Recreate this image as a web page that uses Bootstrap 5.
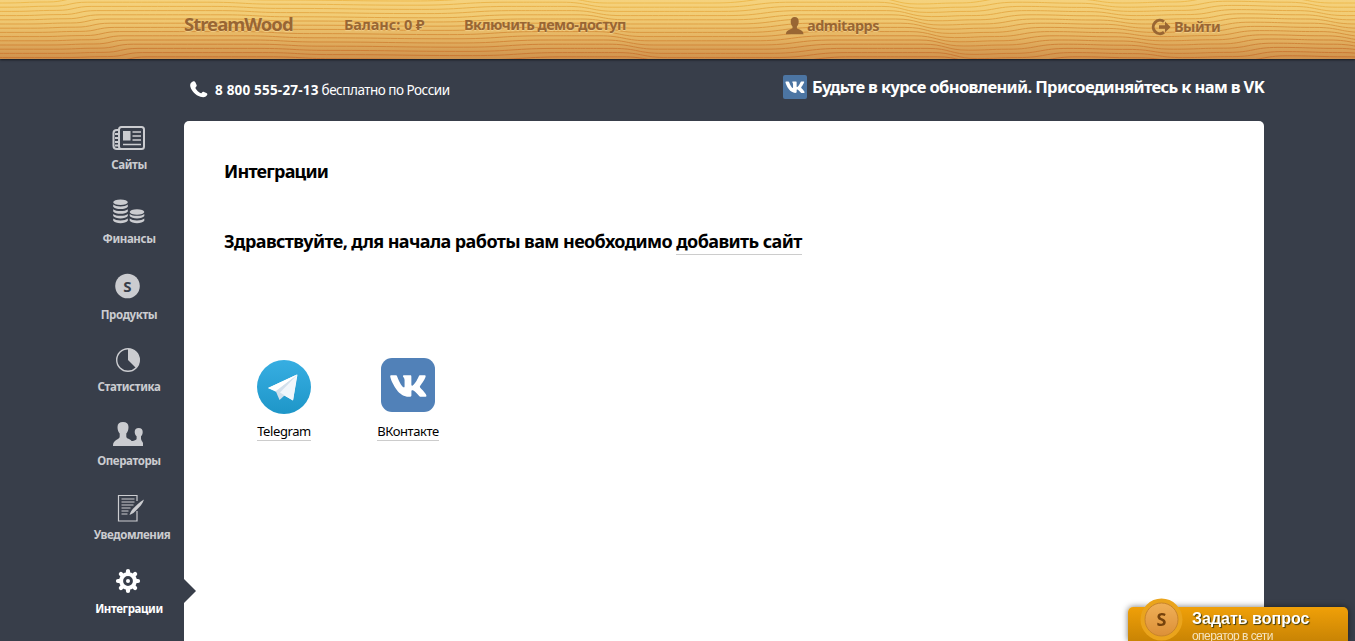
<!DOCTYPE html>
<html lang="ru">
<head>
    <meta charset="UTF-8">
    <meta name="viewport" content="width=device-width, initial-scale=1.0">
    <title>StreamWood - Интеграции</title>
    <link href="https://cdn.jsdelivr.net/npm/bootstrap@5.3.0/dist/css/bootstrap.min.css" rel="stylesheet">
    <style>
        body {
            height: 641px;
            background-color: #383e4a;
            font-family: "Noto Sans", "Open Sans", sans-serif;
            color: #000;
            line-height: 1.2;
        }
        a {
            color: inherit;
            text-decoration: none;
        }
        svg {
            display: block;
            flex: none;
        }
        .wrap {
            width: 1174px;
            margin-left: 90px;
        }
        /* wooden top bar */
        .topbar {
            height: 59px;
            background: linear-gradient(#f5d27d, #f1cb74 30%, #e4b362 65%, #cf914c);
            box-shadow: 0 1px 2px #15181e;
        }
        .topbar .grain {
            position: absolute;
            left: 0;
            top: 0;
        }
        .topbar .wrap {
            padding-left: 94px;
            height: 50px;
            color: #996633;
            font-weight: 700;
            font-size: 14.5px;
            letter-spacing: -0.55px;
            text-shadow: 0 1px 1px #f3d08a;
        }
        .brand {
            width: 160px;
            padding-bottom: 1px;
            font-size: 18.5px;
            letter-spacing: -1px;
        }
        .balance { width: 120px; letter-spacing: -0.1px; }
        .demo { width: 321px; }
        .user { width: 366px; padding-top: 2px; }
        .exit { padding-top: 3px; }
        .contacts {
            height: 62px;
            padding-left: 100px;
            color: #fff;
        }
        .phone {
            font-size: 13.5px;
            letter-spacing: -0.5px;
        }
        .phone b { letter-spacing: 0.2px; }
        .vk-join {
            padding-top: 16px;
            font-size: 16.5px;
            font-weight: 700;
            line-height: 24px;
            letter-spacing: -0.64px;
        }
        /* sidebar */
        .side {
            width: 94px;
            color: #cbccd0;
            font-size: 11.5px;
            font-weight: 700;
            letter-spacing: -0.4px;
            line-height: 16px;
        }
        .side a {
            height: 74px;
            width: 78px;
        }
        .side svg {
            height: 34px;
            width: 40px;
            margin-bottom: 2px;
        }
        .side .low svg { margin-bottom: 4px; }
        .side .wide { width: 84px; }
        .side .wide svg { margin-right: 6px; }
        .panel {
            width: 1080px;
            height: 520px;
            padding: 39px 40px 0;
            background: #fff;
            border-radius: 5px 5px 0 0;
        }
        .pointer {
            position: absolute;
            left: 0;
            top: 458px;
        }
        .panel h1, .panel h2 {
            font-size: 18px;
            font-weight: 700;
            line-height: 22px;
            letter-spacing: -0.6px;
        }
        .panel h1 { letter-spacing: -0.8px; }
        .panel h2 { margin-top: 48px; }
        .lined {
            display: inline-block;
            border-bottom: 1px solid #ccc;
        }
        h2 .lined { padding-bottom: 2px; }
        .apps {
            margin-top: 103px;
            font-size: 13px;
            line-height: 18px;
            letter-spacing: -0.4px;
        }
        .app-link { width: 120px; }
        .app-link + .app-link { width: 128px; }
        /* chat button */
        .chat {
            position: fixed;
            left: 1128px;
            top: 607px;
            width: 220px;
            height: 34px;
            padding-left: 64px;
            background: linear-gradient(#f0a008, #c98404);
            border-radius: 5px 5px 0 0;
            box-shadow: 0 0 6px rgba(0, 0, 0, .55);
            font-family: "Liberation Sans", Arial, sans-serif;
            color: #fff;
        }
        .chat svg {
            position: absolute;
            left: 12px;
            top: -9px;
        }
        .chat b {
            font-size: 16px;
            line-height: 18px;
            padding-top: 3px;
            text-shadow: 1px 1px 1px #3d3a10;
        }
        .chat span {
            font-size: 12px;
            line-height: 16px;
            letter-spacing: -0.55px;
            color: #f5e4c0;
        }
    </style>
</head>
<body class="overflow-hidden">
    <header class="topbar position-relative">
        <svg class="grain" id="grain" width="1355" height="59" fill="none"></svg>
        <div class="wrap d-flex align-items-center position-relative">
            <a class="brand" href="#">StreamWood</a>
            <a class="balance" href="#">Баланс: 0 ₽</a>
            <a class="demo" href="#">Включить демо-доступ</a>
            <a class="user d-flex align-items-center" href="#">
                <svg width="22" height="18" viewBox="0 0 22 18" fill="#996633"><path d="M5.700 4.600C5.700 1.500 7.100 0 9.700 0s4 1.500 4 4.600c0 2.200-.6 3.700-1.800 4.900v1.600c0 1.300 6.500 1.300 6.600 6.100H.900c.1-4.800 6.600-4.800 6.600-6.100V9.500C6.300 8.300 5.700 6.800 5.700 4.600z"/></svg>
                <span>admitapps</span>
            </a>
            <a class="exit d-flex align-items-center" href="#">
                <svg width="23" height="18" viewBox="0 0 23 18" fill="none"><path d="M13 3.600A6.700 6.700 0 1 0 13 14.300" stroke="#996633" stroke-width="3"/><path d="M8 7.200h6V3.500l5.600 5.500-5.600 5.500v-3.700H8z" fill="#996633"/></svg>
                <span>Выйти</span>
            </a>
        </div>
    </header>

    <div class="wrap contacts d-flex justify-content-between">
        <div class="phone d-flex align-items-center">
            <svg width="25" height="18" viewBox="0 0 25 18" fill="#fff"><path d="M2.800.6c1-.6 2.200-.2 2.700.8l1.100 2.500c.4.900.1 1.500-.8 2.300-.6.600-.4 1 .3 2.100 1 1.500 2.200 2.600 3.700 3.500 1 .6 1.500.6 2-.1.700-.9 1.300-1.100 2.200-.7l2.400 1c1 .5 1.200 1.400.6 2.300-1.300 2-3.700 2.300-6.600 1.400C5.600 14.200 1.400 9.900.3 5.400-.2 3.100.8 1.500 2.800.6z"/></svg>
            <span><b>8 800 555-27-13</b> бесплатно по России</span>
        </div>
        <a class="vk-join d-flex align-items-start" href="#">
            <svg width="29" height="24" viewBox="0 0 29 24"><rect width="24" height="24" rx="2" fill="#4c75a3"/><path id="vk" transform="translate(-2.400 -2.600) scale(1.200)" fill="#fff" d="M19.376 17.123h-1.744c-.66 0-.864-.525-2.050-1.727-1.033-1-1.490-1.135-1.744-1.135-.356 0-.458.102-.458.593v1.575c0 .424-.135.678-1.253.678-1.846 0-3.896-1.118-5.335-3.202C4.624 10.857 4.030 8.570 4.030 8.096c0-.254.102-.491.593-.491h1.744c.44 0 .61.203.78.677.863 2.490 2.303 4.675 2.896 4.675.22 0 .322-.102.322-.66V9.721c-.068-1.186-.695-1.287-.695-1.710 0-.204.17-.407.44-.407h2.744c.373 0 .508.203.508.643v3.473c0 .372.17.508.271.508.22 0 .407-.136.813-.542 1.254-1.406 2.151-3.574 2.151-3.574.119-.254.322-.491.763-.491h1.744c.525 0 .644.27.525.643-.22 1.017-2.354 4.031-2.354 4.031-.186.305-.254.44 0 .78.186.254.796.779 1.203 1.253.745.847 1.320 1.558 1.473 2.050.17.49-.085.744-.576.744z"/></svg>
            <span>Будьте в курсе обновлений. Присоединяйтесь к нам в VK</span>
        </a>
    </div>

    <div class="wrap d-flex">
        <nav class="side d-flex flex-column">
            <a class="d-flex flex-column align-items-center" href="#">
                <svg viewBox="-1 0 40 34" fill="none" stroke="#cbccd0" stroke-width="2"><rect x="9" y="6" width="25" height="22" rx="2.500"/><path d="M9 9H7C5 9 3.500 10 3.500 12v13c0 2 1.500 3 3.500 3H12M5 13h3M5 17h3M5 21h3M5 24.500h3"/><path d="M22.500 11H31M22.500 15H31M22.500 19H31M13 23.500h18" stroke-width="1.600"/><path d="M13 10h7.500v9.500H13z" fill="#cbccd0" stroke="none"/></svg>
                <span>Сайты</span>
            </a>
            <a class="d-flex flex-column align-items-center" href="#">
                <svg viewBox="-1 0 40 34" fill="#cbccd0"><ellipse cx="10.500" cy="7.300" rx="7.300" ry="2.800"/><path id="coin" d="M3.200 9.500c2.600 2.500 12 2.500 14.600 0v2.200c-2 3.200-12.600 3.200-14.600 0z"/><use href="#coin" y="4.700"/><use href="#coin" y="9.400"/><use href="#coin" y="14.100"/><ellipse cx="27" cy="17" rx="7.300" ry="2.800"/><use href="#coin" x="16.500" y="9.400"/><use href="#coin" x="16.500" y="14.100"/></svg>
                <span>Финансы</span>
            </a>
            <a class="low d-flex flex-column align-items-center" href="#">
                <svg viewBox="0 0 40 34"><circle cx="18.500" cy="17" r="12.300" fill="#cbccd0"/><text x="18.300" y="22.500" text-anchor="middle" font-size="15" fill="#383e4a">S</text></svg>
                <span>Продукты</span>
            </a>
            <a class="d-flex flex-column align-items-center" href="#">
                <svg viewBox="0 0 40 34"><circle cx="19" cy="17" r="11.300" fill="none" stroke="#cbccd0" stroke-width="1.400"/><path d="M19 17V5.700A11.300 11.300 0 0 1 27 25z" fill="#cbccd0"/></svg>
                <span>Статистика</span>
            </a>
            <a class="d-flex flex-column align-items-center" href="#">
                <svg viewBox="0 0 40 34" fill="#cbccd0"><path d="M8.500 10c0-3.300 2-5 5.500-5s5.500 1.700 5.500 5c0 3-.8 5-2.200 6.500v3c0 2.300 4.200 2.400 5.200 4.500h1.500c2-1 3.600-1 3.600-2.300v-2.500c-1.100-1-1.900-2.500-1.900-4.300 0-2.400 1.400-3.800 4-3.800s4 1.400 4 3.800c0 1.800-.6 3.300-1.700 4.300v2.500c0 2 2 3.100 2 4.600V29H4c-.3-6.800 6.700-6 6.700-9.500v-3C9.300 15 8.500 13 8.500 10z"/></svg>
                <span>Операторы</span>
            </a>
            <a class="wide d-flex flex-column align-items-center" href="#">
                <svg viewBox="-1 0 40 34" fill="none" stroke="#cbccd0" stroke-width="1.200"><path d="M27 10V4.500H8.500v25.500H27V20M11.500 8h13M11.500 11h13M11.500 14h12M11.500 17h9M11.500 20h7M11.500 23h6"/><path d="M19.500 24c1-3 2-4.600 4-6.700 3-3 6-6.300 10.500-8.800-1.500 4.500-4.500 7.700-7.500 10.500-2 2-4 4-7 5z" fill="#cbccd0" stroke="none"/></svg>
                <span>Уведомления</span>
            </a>
            <a class="d-flex flex-column align-items-center text-white" href="#">
                <svg viewBox="0 1 40 34" fill="none" stroke="#fff"><circle cx="19" cy="17" r="6.900" stroke-width="4"/><path d="M19 9V7M19 25v2M11 17H9M27 17h2M13.400 11.400l-1.500-1.500M24.600 11.400l1.500-1.500M13.400 22.600l-1.500 1.500M24.600 22.600l1.500 1.500" stroke-width="4.200" stroke-linecap="round"/><circle cx="19" cy="17" r="2" fill="#fff" stroke="none"/></svg>
                <span>Интеграции</span>
            </a>
        </nav>

        <main class="panel position-relative">
            <svg class="pointer" width="12" height="24" fill="#383e4a"><path d="M0 0l12 12L0 24z"/></svg>
            <h1 class="mb-0">Интеграции</h1>
            <h2 class="mb-0">Здравствуйте, для начала работы вам необходимо <a class="lined" href="#">добавить сайт</a></h2>
            <div class="apps d-flex">
                <a class="app-link d-flex flex-column align-items-center" href="#">
                    <svg width="54" height="64" viewBox="0 0 54 64"><defs><linearGradient id="tg" x2="0" y2="1"><stop stop-color="#37aee2"/><stop offset="1" stop-color="#1e96c8"/></linearGradient></defs><circle cx="27" cy="29" r="27" fill="url(#tg)"/><path d="M11 30l29-13.500c.4 0 .5.400.4.800L36 42.500 28 38z" fill="#fff"/><path d="M18.500 32.500l4 9.500 5-4.500L40 17z" fill="#d3e0ec"/><path d="M11 30l8 3L40 16.500z" fill="#fff"/><path d="M23 34.500L40 17l-4 25.500z" fill="#f1f6fb"/></svg>
                    <span class="lined">Telegram</span>
                </a>
                <a class="app-link d-flex flex-column align-items-center" href="#">
                    <svg width="54" height="64" viewBox="0 0 54 64"><rect width="54" height="54" rx="11" fill="#5181b8"/><g transform="translate(4.600 4.900) scale(1.890)"><use href="#vk"/></g></svg>
                    <span class="lined">ВКонтакте</span>
                </a>
            </div>
        </main>
    </div>

    <a class="chat d-flex flex-column" href="#">
        <svg width="43" height="43" viewBox="0 0 43 43"><defs><linearGradient id="knob" x2="0" y2="1"><stop stop-color="#f0b058"/><stop offset="1" stop-color="#dc9038"/></linearGradient></defs><circle cx="21.500" cy="21.500" r="21" fill="#eaa41c"/><circle cx="21.500" cy="21.500" r="16.500" fill="url(#knob)" stroke="#c8842c"/><text x="21.500" y="28" text-anchor="middle" font-family="Noto Sans" font-weight="700" font-size="18" fill="#75420c">S</text></svg>
        <b>Задать вопрос</b>
        <span>оператор в сети</span>
    </a>

    <script>
        // Wood grain: each line follows the same wave, shifted right as it goes down
        const wave = [[-90, 3], [30, 3], [75, 2], [110, -2], [230, -2], [300, 0], [440, 1], [530, -2], [585, -2], [635, 3], [740, 3], [815, -2], [900, -2], [945, 4], [985, 3], [1040, -2], [1100, -1], [1150, 3], [1200, 2], [1250, -3], [1310, -2], [1360, 3], [1400, 3]];
        let lines = '';
        for (let i = 0; i < 15; i++) {
            const y = i * 4.200;
            const shift = (y - 25) * 1.1;
            let d = '';
            for (let k = 1; k < wave.length; k++) {
                const [x0, a] = wave[k - 1];
                const [x1, b] = wave[k];
                const m = (x0 + x1) / 2 + shift;
                if (k === 1) d += `M${x0 + shift} ${y + a}`;
                d += `C${m} ${y + a} ${m} ${y + b} ${x1 + shift} ${y + b}`;
            }
            const t = y / 59;
            const color = `rgb(${238 - t * 38},${186 - t * 70},${78 - t * 28})`;
            lines += `<path d="${d}" stroke="${color}" stroke-width="1"/>`;
        }
        document.getElementById('grain').innerHTML = lines;
    </script>
    <script src="https://cdn.jsdelivr.net/npm/bootstrap@5.3.0/dist/js/bootstrap.bundle.min.js"></script>
</body>
</html>
